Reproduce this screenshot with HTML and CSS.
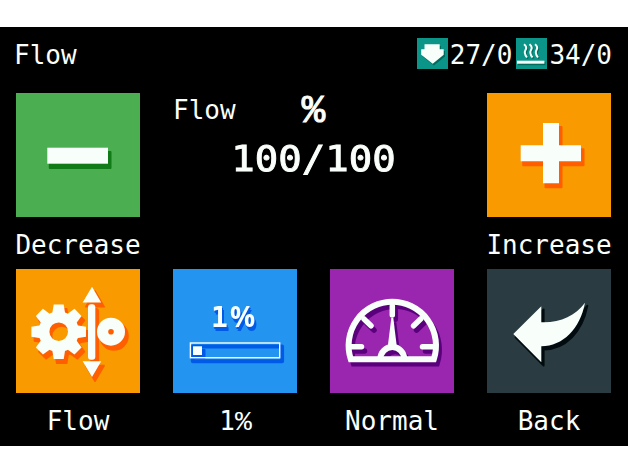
FILE: index.html
```html
<!DOCTYPE html>
<html lang="en">
<head>
<meta charset="utf-8">
<title>Flow</title>
<link rel="stylesheet" href="styles.css">
</head>
<body>
<main class="screen">
  <header class="bar">
    <h1 class="title">Flow</h1>
    <div class="temps">
      <svg class="temp-icon" viewBox="0 0 31 31">
        <path class="temp-shade" d="M8.500 8H24V13H28V18.500L17 27.500L5.500 18.500V13H8.500Z"/>
        <path class="ink" d="M7.500 6.300H22.700V11.300H26.700V16.800L15.700 25.700L4.200 16.800V11.300H7.500Z"/>
      </svg>
      <span class="temp">27/0</span>
      <svg class="temp-icon" viewBox="0 0 31 31">
        <path class="temp-shade" d="M2 24H29.500V27.200H2Z"/>
        <path class="wave wave-shade" d="M9 7.500Q12.500 10 10.500 13T12 20.500M14.500 7.500Q18 10 16 13T17.500 20.500M20 7.500Q23.500 10 21.500 13T23 20.500"/>
        <path class="wave" d="M8 6.200Q11.500 9 9.500 12T11 19.500M13.500 6.200Q17 9 15 12T16.500 19.500M19 6.200Q22.500 9 20.500 12T22 19.500"/>
        <path class="ink" d="M1 22.700H28.400V25.700H1Z"/>
      </svg>
      <span class="temp">34/0</span>
    </div>
  </header>

  <section class="row">
    <div class="cell">
      <svg class="tile green" viewBox="0 0 124 124">
        <rect class="shade" x="33.800" y="59" width="60.700" height="16"/>
        <rect class="ink" x="31.300" y="54.700" width="60.700" height="16"/>
      </svg>
      <span class="label">Decrease</span>
    </div>
    <div class="readout">
      <div class="name">Flow</div>
      <div class="unit">%</div>
      <div class="value">100/100</div>
    </div>
    <div class="cell">
      <svg class="tile orange" viewBox="0 0 124 124">
        <defs><path id="plus" d="M56 30H72V52.300H94V68.300H72V90.300H56V68.300H33.700V52.300H56Z"/></defs>
        <use class="shade" href="#plus" x="2.500" y="4"/>
        <use class="ink" href="#plus"/>
      </svg>
      <span class="label">Increase</span>
    </div>
  </section>

  <section class="row bottom">
    <div class="cell">
      <svg class="tile orange" viewBox="0 0 124 124">
        <defs>
          <path id="tooth" d="M-6.500 -18L-5 -27.300H5L6.500 -18Z"/>
          <g id="flow">
            <circle class="ring" cx="42.700" cy="62.700" r="14.700"/>
            <g transform="translate(42.700 62.700)">
              <use href="#tooth"/><use href="#tooth" transform="rotate(45)"/>
              <use href="#tooth" transform="rotate(90)"/><use href="#tooth" transform="rotate(135)"/>
              <use href="#tooth" transform="rotate(180)"/><use href="#tooth" transform="rotate(225)"/>
              <use href="#tooth" transform="rotate(270)"/><use href="#tooth" transform="rotate(315)"/>
            </g>
            <path d="M76 17.700L85.200 33.500H66.700ZM76 108L85.200 92.300H66.700Z"/>
            <rect x="72" y="35.300" width="7.300" height="55.400" rx="3"/>
            <path fill-rule="evenodd" d="M81 62.700a14 14 0 1 0 28 0a14 14 0 1 0 -28 0ZM92.200 62.700a2.800 2.800 0 1 1 5.600 0a2.800 2.800 0 1 1 -5.600 0Z"/>
          </g>
        </defs>
        <use class="flow-shade" href="#flow" x="3" y="4.300"/>
        <use class="flow-ink" href="#flow"/>
      </svg>
      <span class="label">Flow</span>
    </div>
    <div class="cell">
      <svg class="tile blue" viewBox="0 0 124 124">
        <rect class="frame frame-shade" x="19.800" y="77.500" width="89.300" height="14.700"/>
        <rect class="shade" x="22.500" y="81" width="9" height="8"/>
        <text class="step" x="38" y="58.300">1<tspan class="step-sign" x="57">%</tspan></text>
        <rect class="frame" x="17.400" y="74" width="89.300" height="14.700"/>
        <rect class="ink" x="20" y="77.300" width="9" height="8.700"/>
      </svg>
      <span class="label">1<span class="percent">%</span></span>
    </div>
    <div class="cell">
      <svg class="tile purple" viewBox="0 0 124 124">
        <defs>
          <g id="gauge">
            <path class="line" d="M20.800 90.200A43.700 43.700 0 1 1 103.800 90.200Z"/>
            <path class="line" d="M50.300 90A12 12 0 0 1 74.300 90"/>
            <path class="line tick" d="M62.300 37V46M34 50L41 56.800M90.600 50L83.600 56.800M20 77.700H31.500M104.600 77.700H92.500"/>
            <path class="needle" d="M61.300 49H63.300L67 79H57.600Z"/>
          </g>
        </defs>
        <use class="gauge-shade" href="#gauge" x="3" y="4.300"/>
        <use class="gauge-ink" href="#gauge"/>
      </svg>
      <span class="label">Normal</span>
    </div>
    <div class="cell">
      <svg class="tile slate" viewBox="0 0 124 124">
        <defs><path id="back" d="M26.300 65L54.300 37.300V53.300C73 54 88 47 98 33.700C93 60 76 77 54.300 77.300V93.300Z"/></defs>
        <use class="shade" href="#back" x="2.300" y="3.200"/>
        <use class="ink" href="#back"/>
      </svg>
      <span class="label">Back</span>
    </div>
  </section>
</main>
</body>
</html>
```
FILE: styles.css
```css
* { box-sizing: border-box; }
body {
  margin: 0;
  padding-top: 27px;
  background: #fff;
  font-family: "DejaVu Sans Mono", monospace;
}
.screen {
  width: 628px;
  height: 419px;
  background: #000;
  color: #fbfffb;
  font-size: 26px;
  line-height: 30px;
  overflow: hidden;
}
.bar {
  display: flex;
  justify-content: space-between;
  align-items: center;
  height: 65.500px;
  padding: 0 16px 10px 14px;
}
.title { margin: 0; font: inherit; }
.temps { display: flex; align-items: center; }
.temp-icon {
  width: 31px;
  height: 31px;
  margin: -3px 2px 0 4px;
  background: #0a9588;
}
.temp-shade { fill: #006b5f; }
.row {
  display: grid;
  grid-template-columns: repeat(4, 124px);
  column-gap: 33px;
  padding: 0 16px;
  height: 176.500px;
}
.cell { display: flex; flex-direction: column; align-items: center; }
.tile { display: block; width: 124px; height: 124px; flex: none; }
.label { margin-top: 13px; white-space: nowrap; }
.percent { font-family: "Liberation Mono", monospace; font-size: 28px; line-height: 1; letter-spacing: -1px; }
.green { background: #4bae50; --shade: #117b18; }
.orange { background: #f99a00; --shade: #ff5f00; }
.blue { background: #2395f1; --shade: #005ae8; }
.purple { background: #9a25ae; --shade: #5b007d; }
.slate { background: #2a3c41; --shade: #020c10; }
.ink { fill: #f8fffa; }
.shade { fill: var(--shade); stroke: var(--shade); stroke-width: 2; stroke-linejoin: round; }
.readout { grid-column: span 2; }
.name { margin-top: 2px; }
.unit, .value {
  width: 281px;
  text-align: center;
  font-size: 39px;
  line-height: 40px;
  -webkit-text-stroke: 1px #fbfffb;
  transform: scaleY(.91);
}
.unit { margin-top: -33px; font-family: "Liberation Mono", monospace; transform: scaleY(1); }
.value { margin-top: 7px; }
.wave { fill: none; stroke: #f8fffa; stroke-width: 2; }
.wave-shade { stroke: #006b5f; }
.ring { fill: none; stroke-width: 10.800; }
.flow-ink { fill: #f8fffa; stroke: #f8fffa; stroke-width: 0; }
.flow-shade { fill: var(--shade); stroke: var(--shade); stroke-width: 1.500; stroke-linejoin: round; }
.step {
  font: bold 28px "DejaVu Sans Mono", monospace;
  fill: #f8fffa;
  filter: drop-shadow(1.500px 2px 0 var(--shade)) drop-shadow(1.500px 2px 0 var(--shade));
}
.step-sign { font-family: "Open Sans", sans-serif; font-weight: 700; }
.frame { fill: none; stroke: #f8fffa; stroke-width: 1.400; }
.frame-shade { stroke: var(--shade); stroke-width: 4; stroke-linejoin: round; }
.line { fill: none; stroke-width: 6; stroke-linejoin: miter; }
.tick { stroke-width: 5.500; stroke-linecap: round; }
.gauge-ink { stroke: #f8fffa; fill: #f8fffa; }
.gauge-shade { stroke: var(--shade); fill: var(--shade); }
.needle { stroke: none; }
```
